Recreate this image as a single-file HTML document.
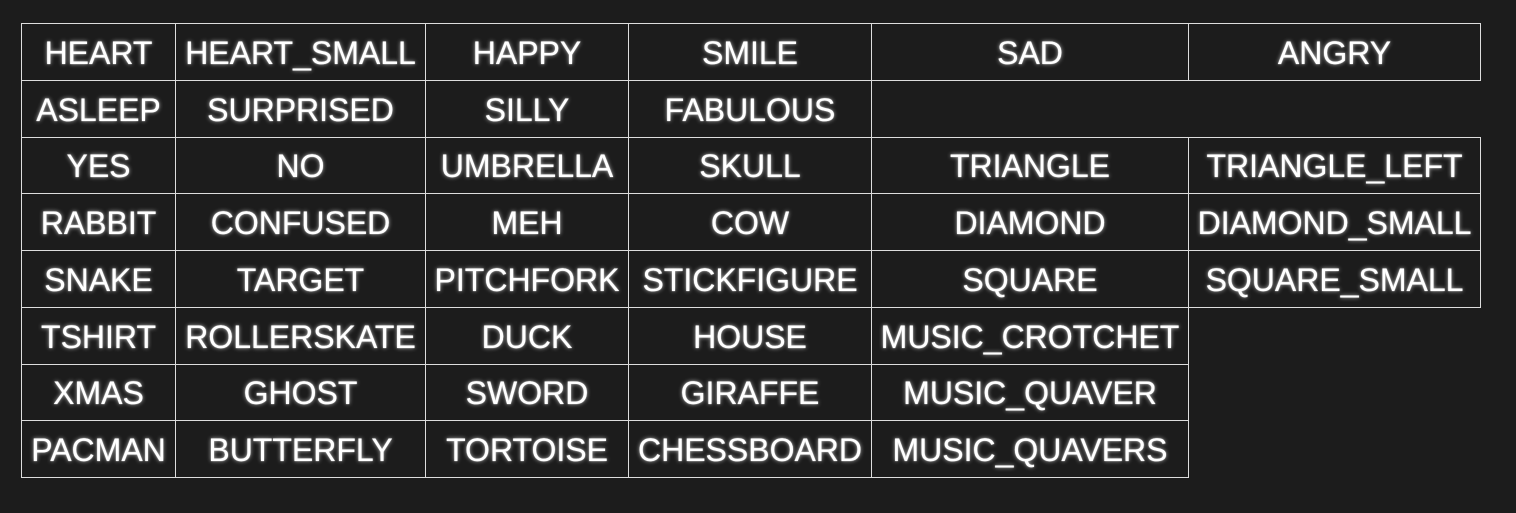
<!DOCTYPE html><html><head><style>
body{margin:0;background:#1c1c1c;width:1516px;height:513px;overflow:hidden;position:relative}
.c{position:absolute;box-sizing:border-box;border:1px solid #ddd;display:flex;align-items:center;justify-content:center;color:#fff;font:32px "Liberation Sans",sans-serif;white-space:nowrap;text-shadow:0 0 4px rgba(255,255,255,.7),0 0 1px #fff;padding-top:2px}
</style></head><body>
<script>
const X=[21,175,425,628,871,1188,1480];
const Y=[23,80,137,193,250,307,364,420,477];
const R=[["HEART","HEART_SMALL","HAPPY","SMILE","SAD","ANGRY"],
["ASLEEP","SURPRISED","SILLY","FABULOUS"],
["YES","NO","UMBRELLA","SKULL","TRIANGLE","TRIANGLE_LEFT"],
["RABBIT","CONFUSED","MEH","COW","DIAMOND","DIAMOND_SMALL"],
["SNAKE","TARGET","PITCHFORK","STICKFIGURE","SQUARE","SQUARE_SMALL"],
["TSHIRT","ROLLERSKATE","DUCK","HOUSE","MUSIC_CROTCHET"],
["XMAS","GHOST","SWORD","GIRAFFE","MUSIC_QUAVER"],
["PACMAN","BUTTERFLY","TORTOISE","CHESSBOARD","MUSIC_QUAVERS"]];
let h="";
R.forEach((r,i)=>r.forEach((t,j)=>{h+=`<div class="c" style="left:${X[j]}px;top:${Y[i]}px;width:${X[j+1]-X[j]+1}px;height:${Y[i+1]-Y[i]+1}px">${t}</div>`}));
document.write(h);
</script>
</body></html>
